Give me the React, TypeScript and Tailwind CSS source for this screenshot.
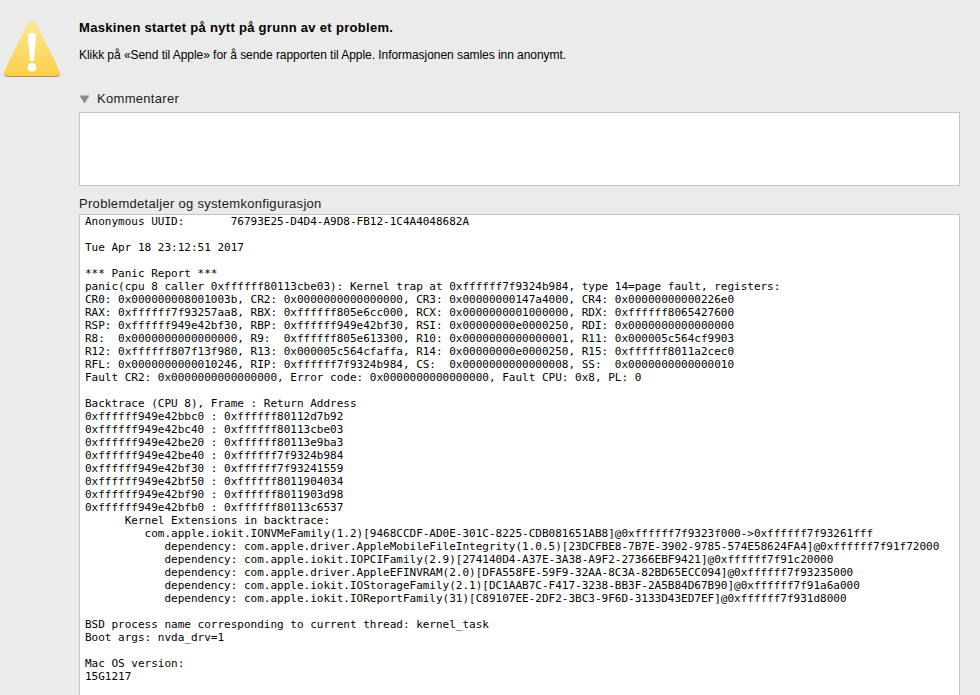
const REPORT = `Anonymous UUID:       76793E25-D4D4-A9D8-FB12-1C4A4048682A

Tue Apr 18 23:12:51 2017

*** Panic Report ***
panic(cpu 8 caller 0xffffff80113cbe03): Kernel trap at 0xffffff7f9324b984, type 14=page fault, registers:
CR0: 0x000000008001003b, CR2: 0x0000000000000000, CR3: 0x00000000147a4000, CR4: 0x00000000000226e0
RAX: 0xffffff7f93257aa8, RBX: 0xffffff805e6cc000, RCX: 0x0000000001000000, RDX: 0xffffff8065427600
RSP: 0xffffff949e42bf30, RBP: 0xffffff949e42bf30, RSI: 0x00000000e0000250, RDI: 0x0000000000000000
R8:  0x0000000000000000, R9:  0xffffff805e613300, R10: 0x0000000000000001, R11: 0x000005c564cf9903
R12: 0xffffff807f13f980, R13: 0x000005c564cfaffa, R14: 0x00000000e0000250, R15: 0xffffff8011a2cec0
RFL: 0x0000000000010246, RIP: 0xffffff7f9324b984, CS:  0x0000000000000008, SS:  0x0000000000000010
Fault CR2: 0x0000000000000000, Error code: 0x0000000000000000, Fault CPU: 0x8, PL: 0

Backtrace (CPU 8), Frame : Return Address
0xffffff949e42bbc0 : 0xffffff80112d7b92
0xffffff949e42bc40 : 0xffffff80113cbe03
0xffffff949e42be20 : 0xffffff80113e9ba3
0xffffff949e42be40 : 0xffffff7f9324b984
0xffffff949e42bf30 : 0xffffff7f93241559
0xffffff949e42bf50 : 0xffffff8011904034
0xffffff949e42bf90 : 0xffffff8011903d98
0xffffff949e42bfb0 : 0xffffff80113c6537
      Kernel Extensions in backtrace:
         com.apple.iokit.IONVMeFamily(1.2)[9468CCDF-AD0E-301C-8225-CDB081651AB8]@0xffffff7f9323f000->0xffffff7f93261fff
            dependency: com.apple.driver.AppleMobileFileIntegrity(1.0.5)[23DCFBE8-7B7E-3902-9785-574E58624FA4]@0xffffff7f91f72000
            dependency: com.apple.iokit.IOPCIFamily(2.9)[274140D4-A37E-3A38-A9F2-27366EBF9421]@0xffffff7f91c20000
            dependency: com.apple.driver.AppleEFINVRAM(2.0)[DFA558FE-59F9-32AA-8C3A-82BD65ECC094]@0xffffff7f93235000
            dependency: com.apple.iokit.IOStorageFamily(2.1)[DC1AAB7C-F417-3238-BB3F-2A5B84D67B90]@0xffffff7f91a6a000
            dependency: com.apple.iokit.IOReportFamily(31)[C89107EE-2DF2-3BC3-9F6D-3133D43ED7EF]@0xffffff7f931d8000

BSD process name corresponding to current thread: kernel_task
Boot args: nvda_drv=1

Mac OS version:
15G1217`;

function WarningIcon() {
  const triangle =
    "M29 0.800c2 0 3.400 1 4.400 2.800l22.800 47c1.400 3 .2 5.400-3 5.400H4.800c-3.200 0-4.400-2.400-3-5.400l22.800-47C25.600 1.800 27 .8 29 .8z";
  return (
    <svg width="58" height="60" viewBox="0 0 58 60" className="shrink-0 -mt-px">
      <defs>
        <linearGradient id="warnFill" x1="0" y1="0" x2="0" y2="1">
          <stop offset="0" stopColor="#fbe894" />
          <stop offset="1" stopColor="#fdd04a" />
        </linearGradient>
      </defs>
      <path d={triangle} fill="#ab9152" transform="translate(0 0.9)" />
      <path d={triangle} fill="url(#warnFill)" />
      <path d="M24.800 16.500c0-2.500 1.700-3.700 4.200-3.700s4.200 1.200 4.200 3.700L30.800 41h-3.600z" fill="#fff" />
      <circle cx="29" cy="47.200" r="4.300" fill="#fff" />
    </svg>
  );
}

export default function App() {
  return (
    <div className="h-screen overflow-hidden bg-[#ebebeb] flex pt-[21px] font-['Liberation_Sans',Arial,sans-serif] text-black">
      {/* Alert icon */}
      <div className="w-[79px] shrink-0 pl-[3px]">
        <WarningIcon />
      </div>

      <div className="flex-1 min-w-0 flex flex-col pr-5">
        <h1 className="text-[13px] leading-[13px] font-bold tracking-[0.3px]">
          Maskinen startet på nytt på grunn av et problem.
        </h1>
        <p className="mt-[15px] text-[12px] leading-[13px] tracking-[-0.05px]">
          Klikk på «Send til Apple» for å sende rapporten til Apple. Informasjonen samles inn anonymt.
        </p>

        {/* Comments */}
        <div className="mt-[30px] flex items-center gap-[7px] h-[14px]">
          <svg width="11" height="9" viewBox="0 0 11 9">
            <path d="M0.500 0.500h10L5.500 8.500z" fill="#8a8a8a" />
          </svg>
          <span className="text-[13px] leading-[14px] text-[#222] tracking-[0.3px]">Kommentarer</span>
        </div>
        <div className="mt-[6px] h-[74px] bg-white border border-[#c4c4c4]" />

        {/* Details, runs off the bottom of the window */}
        <div className="mt-[10px] text-[13px] leading-[15px] text-[#222] tracking-[0.3px]">
          Problemdetaljer og systemkonfigurasjon
        </div>
        <div className="mt-[3px] -mb-1 flex-1 min-h-0 bg-white border border-[#c4c4c4] pl-[5px] overflow-hidden">
          <pre className="font-['DejaVu_Sans_Mono',monospace] text-[11px] leading-[13px] text-black">{REPORT}</pre>
        </div>
      </div>
    </div>
  );
}
